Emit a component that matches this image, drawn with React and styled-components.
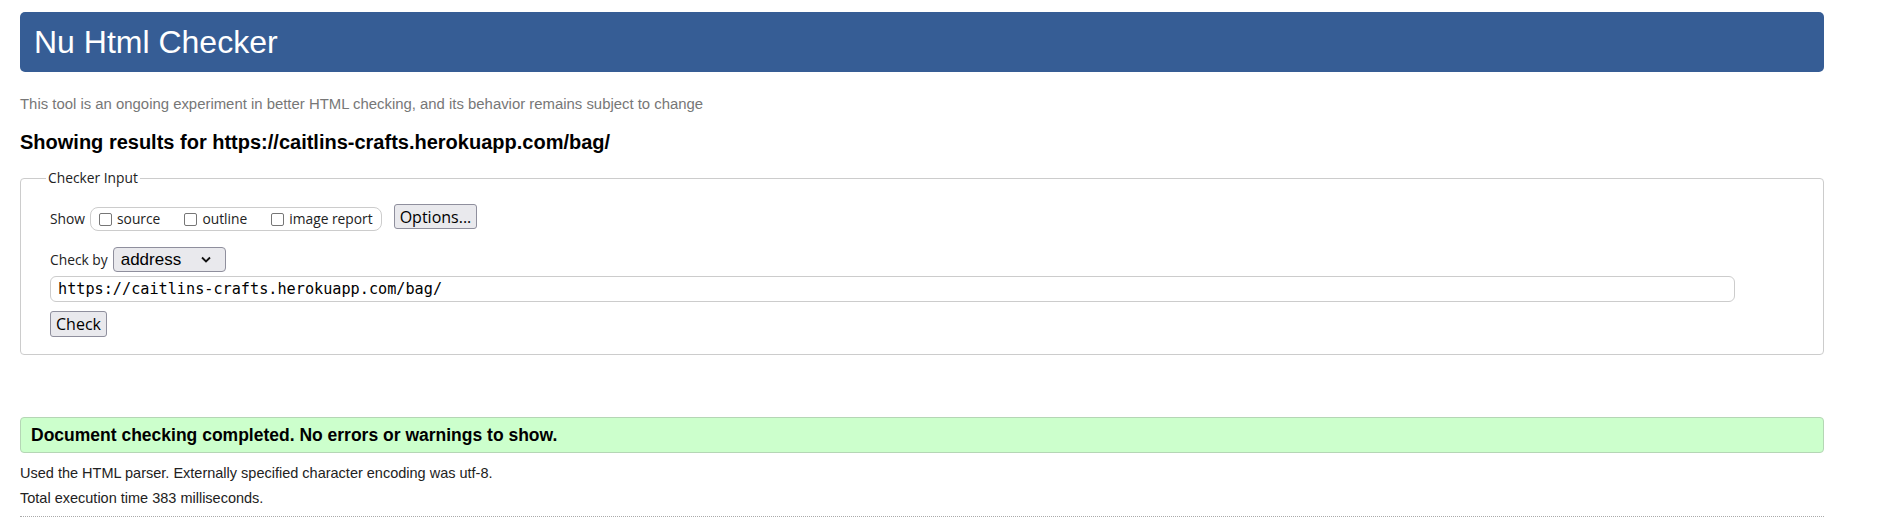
import React from "react";
import styled, { createGlobalStyle } from "styled-components";

const Global = createGlobalStyle`
  html, body { margin: 0; padding: 0; background: #fff; }
  body { font-family: "Liberation Sans", Arial, sans-serif; color: #000; }
`;

const Page = styled.div`
  width: 1804px;
  padding: 12px 0 0 20px;
`;

const Header = styled.h1`
  margin: 0;
  height: 60px;
  display: flex;
  align-items: center;
  padding-left: 14px;
  background: #365d95;
  color: #fff;
  border-radius: 5px;
  font-size: 32px;
  font-weight: 400;
`;

const Subtitle = styled.p`
  margin: 23px 0 0;
  font-size: 14.9px;
  line-height: 18px;
  color: #777;
`;

const ResultsTitle = styled.h2`
  margin: 17px 0 0;
  font-size: 20px;
  line-height: 24px;
  font-weight: 700;
`;

const Fieldset = styled.fieldset`
  margin: 15px 0 0;
  padding: 0 0 17px 29px;
  border: 1px solid #ccc;
  border-radius: 4px;
  font-family: "Open Sans", "Noto Sans", sans-serif;
  font-size: 13.8px;
  color: #222;
`;

const Legend = styled.legend`
  padding: 0 2px;
  margin-left: -4px;
  line-height: 18px;
  font-size: 13.8px;
`;

const Row = styled.div`
  display: flex;
  align-items: ${(p) => p.$align || "center"};
  margin-top: ${(p) => p.$top}px;
`;

const Label = styled.span`
  line-height: 18px;
  margin-top: ${(p) => p.$top || 0}px;
`;

const Group = styled.div`
  display: flex;
  align-items: center;
  height: 22px;
  margin: 3px 0 0 5px;
  padding: 0 8px;
  border: 1px solid #ccc;
  border-radius: 8px;
  gap: 24px;
`;

const Check = styled.label`
  display: flex;
  align-items: center;
  gap: 5px;
  line-height: 18px;
`;

const Box = styled.input.attrs({ type: "checkbox" })`
  appearance: none;
  margin: 0;
  width: 13px;
  height: 13px;
  border: 1px solid #767676;
  border-radius: 2px;
  background: #fff;
`;

const Button = styled.button`
  height: ${(p) => p.$h || 25}px;
  margin-left: ${(p) => p.$left || 0}px;
  padding: 0 5px;
  border: 1px solid #8f8f9d;
  border-radius: 3px;
  background: #e9e9ed;
  font-family: "Open Sans", "Noto Sans", sans-serif;
  font-size: 16px;
  color: #000;
  line-height: 1;
`;

const Select = styled.div`
  display: flex;
  align-items: center;
  justify-content: space-between;
  box-sizing: border-box;
  width: 113px;
  height: 25px;
  margin-left: 5px;
  padding: 0 14px 0 7px;
  border: 1px solid #8f8f9d;
  border-radius: 4px;
  background: #e9e9ed;
  font-family: "Liberation Sans", Arial, sans-serif;
  font-size: 17px;
  color: #000;
`;

const UrlInput = styled.input`
  display: block;
  box-sizing: border-box;
  width: 1685px;
  height: 26px;
  margin-top: 4px;
  padding: 0 7px;
  border: 1px solid #ccc;
  border-radius: 6px;
  font-family: "DejaVu Sans Mono", "Liberation Mono", monospace;
  font-size: 15.2px;
  color: #000;
  outline: none;
`;

const Done = styled.div`
  margin-top: 62px;
  height: 34px;
  display: flex;
  align-items: center;
  padding-left: 10px;
  background: #ccffcc;
  border: 1px solid #b5d6b5;
  border-radius: 4px;
  font-size: 17.5px;
  font-weight: 700;
`;

const Info = styled.p`
  margin: ${(p) => p.$top}px 0 0;
  font-size: 14.5px;
  line-height: 18px;
  color: #222;
`;

const Rule = styled.hr`
  margin: 9px 0 0;
  border: 0;
  border-top: 1px dotted #aaa;
`;

const Chevron = () => (
  <svg width="10" height="7" viewBox="0 0 10 7" aria-hidden="true">
    <path d="M1 1.5 L5 5.5 L9 1.5" fill="none" stroke="#111" strokeWidth="1.8" />
  </svg>
);

export default function App() {
  return (
    <>
      <Global />
      <Page>
        <Header>Nu Html Checker</Header>
        <Subtitle>
          This tool is an ongoing experiment in better HTML checking, and its behavior remains subject to change
        </Subtitle>
        <ResultsTitle>Showing results for https://caitlins-crafts.herokuapp.com/bag/</ResultsTitle>
        <Fieldset>
          <Legend>Checker Input</Legend>
          <Row $top={17} $align="flex-start">
            <Label $top={6}>Show</Label>
            <Group>
              <Check><Box />source</Check>
              <Check><Box />outline</Check>
              <Check><Box />image report</Check>
            </Group>
            <Button $left={12}>Options...</Button>
          </Row>
          <Row $top={16}>
            <Label>Check by</Label>
            <Select>
              <span>address</span>
              <Chevron />
            </Select>
          </Row>
          <UrlInput readOnly value="https://caitlins-crafts.herokuapp.com/bag/" />
          <Row $top={9}>
            <Button $h={26}>Check</Button>
          </Row>
        </Fieldset>
        <Done>Document checking completed. No errors or warnings to show.</Done>
        <Info $top={11}>Used the HTML parser. Externally specified character encoding was utf-8.</Info>
        <Info $top={7}>Total execution time 383 milliseconds.</Info>
        <Rule />
      </Page>
    </>
  );
}
